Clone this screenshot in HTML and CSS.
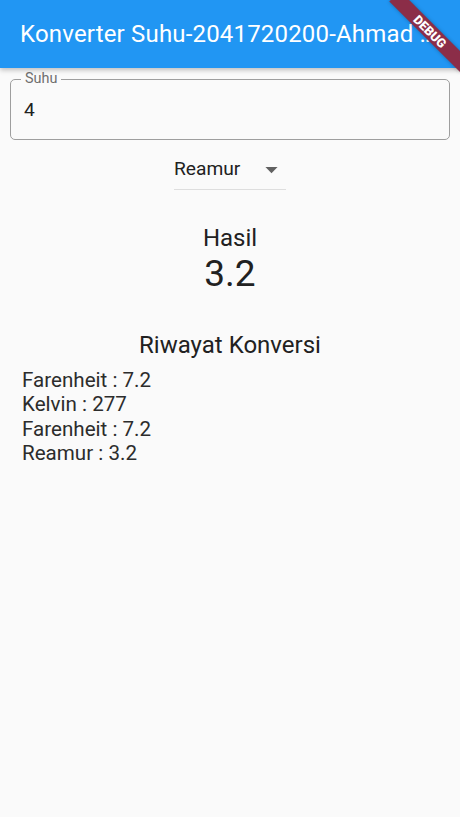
FILE: index.html
```html
<!DOCTYPE html>
<html>
<head>
<meta charset="utf-8">
<link rel="stylesheet" href="styles.css">
</head>
<body>
<div class="app">
  <header class="appbar">
    <h1 class="title">Konverter Suhu-2041720200-Ahmad …</h1>
  </header>
  <main class="content">
    <div class="field">
      <span class="field-label">Suhu</span>
      <span class="field-value">4</span>
    </div>
    <div class="dropdown-row">
      <div class="dropdown">
        <span class="dropdown-text">Reamur</span>
        <svg class="dropdown-arrow" width="29" height="29" viewBox="0 0 24 24"><path d="M7 10l5 5 5-5z" fill="#616161"/></svg>
      </div>
    </div>
    <div class="result">
      <div class="result-label">Hasil</div>
      <div class="result-value">3.2</div>
    </div>
    <div class="history">
      <div class="history-title">Riwayat Konversi</div>
      <ul class="history-list">
        <li>Farenheit : 7.2</li>
        <li>Kelvin : 277</li>
        <li>Farenheit : 7.2</li>
        <li>Reamur : 3.2</li>
      </ul>
    </div>
  </main>
  <div class="banner"><span>DEBUG</span></div>
</div>
</body>
</html>
```
FILE: styles.css
```css
html, body {
  margin: 0;
  padding: 0;
  background: #fafafa;
  font-family: Roboto, "Liberation Sans", sans-serif;
  color: #212121;
}
.app {
  position: relative;
  width: 460px;
  height: 817px;
  overflow: hidden;
}
.appbar {
  height: 68px;
  background: #2196f3;
  box-shadow: 0 2px 5px rgba(0,0,0,0.25);
  display: flex;
  align-items: center;
  padding: 0 20px;
  box-sizing: border-box;
  position: relative;
  z-index: 1;
}
.title {
  margin: 0;
  font-size: 24px;
  font-weight: 400;
  letter-spacing: 0.18px;
  color: #fff;
  line-height: 28px;
  white-space: nowrap;
  overflow: hidden;
}
.content {
  display: flex;
  flex-direction: column;
  padding: 11px 10px 0;
}
.field {
  position: relative;
  height: 61px;
  border: 1px solid #9e9e9e;
  border-radius: 5px;
  box-sizing: border-box;
  display: flex;
  align-items: center;
  padding: 0 13px;
}
.field-label {
  position: absolute;
  left: 10px;
  top: -9px;
  padding: 0 4px;
  background: #fafafa;
  font-size: 14.4px;
  line-height: 16px;
  color: #6f6f6f;
}
.field-value {
  font-size: 19.2px;
  line-height: 24px;
  color: #212121;
}
.dropdown-row {
  display: flex;
  justify-content: center;
  margin-top: 9px;
}
.dropdown {
  width: 112px;
  height: 40px;
  border-bottom: 1px solid #dedede;
  display: flex;
  align-items: center;
  justify-content: space-between;
}
.dropdown-text {
  font-size: 19.2px;
  line-height: 24px;
  color: #212121;
}
.dropdown-arrow {
  display: block;
}
.result {
  display: flex;
  flex-direction: column;
  align-items: center;
  margin-top: 34px;
}
.result-label {
  font-size: 24px;
  line-height: 28px;
}
.result-value {
  font-size: 37px;
  line-height: 40px;
  margin-top: 2px;
}
.history {
  display: flex;
  flex-direction: column;
  margin-top: 37px;
}
.history-title {
  text-align: center;
  font-size: 24px;
  line-height: 28px;
}
.history-list {
  list-style: none;
  margin: 9px 0 0;
  padding: 0 0 0 12px;
}
.history-list li {
  font-size: 20.6px;
  line-height: 24.4px;
  color: #2c2c2c;
}
.banner {
  position: absolute;
  left: 380px;
  top: 24px;
  width: 100px;
  height: 15px;
  background: #8b2d48;
  box-shadow: 0 0 4px rgba(0,0,0,0.3);
  transform: rotate(45deg);
  display: flex;
  align-items: center;
  justify-content: center;
  z-index: 2;
}
.banner span {
  color: #fff;
  font-size: 12.6px;
  font-weight: 900;
  line-height: 15px;
}
```
